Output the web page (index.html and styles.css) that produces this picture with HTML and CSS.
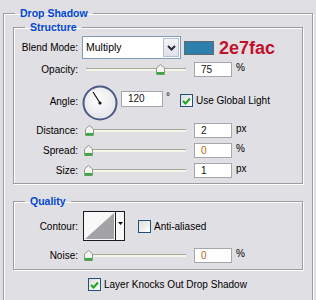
FILE: index.html
```html
<!DOCTYPE html>
<html>
<head>
<meta charset="utf-8">
<link rel="stylesheet" href="styles.css">
</head>
<body>
<fieldset class="group outer">
  <legend class="title outer-title">Drop Shadow</legend>

  <fieldset class="group inner structure">
    <legend class="title inner-title">Structure</legend>

    <div class="row row-blend">
      <span class="label">Blend Mode:</span>
      <div class="select">
        <span class="select-value">Multiply</span>
        <span class="select-btn">
          <svg width="9" height="6" viewBox="0 0 9 6"><path d="M1 1 L4.5 4.5 L8 1" fill="none" stroke="#2a2a3a" stroke-width="2"/></svg>
        </span>
      </div>
      <span class="swatch"></span>
      <span class="hex">2e7fac</span>
    </div>

    <div class="row row-opacity">
      <span class="label">Opacity:</span>
      <div class="slider">
        <div class="track"></div>
        <svg class="thumb" style="left:72px" width="9" height="11" viewBox="0 0 9 11"><path d="M0.5 10.5 V4 L4.5 0.5 L8.5 4 V10.5 Z" fill="#f4f4f0" stroke="#8c9a8c"/><rect x="1" y="8" width="7" height="2.5" fill="#3aa83a"/></svg>
      </div>
      <span class="num">75</span>
      <span class="unit">%</span>
    </div>

    <div class="row row-angle">
      <span class="label">Angle:</span>
      <svg class="dial" width="36" height="36" viewBox="0 0 36 36">
        <defs>
          <radialGradient id="dg" cx="0.45" cy="0.4" r="0.6">
            <stop offset="0" stop-color="#ffffff"/>
            <stop offset="1" stop-color="#e4e4ea"/>
          </radialGradient>
        </defs>
        <circle cx="18" cy="18" r="16.5" fill="url(#dg)" stroke="#4c5a86" stroke-width="2"/>
        <line x1="18" y1="18" x2="11" y2="7" stroke="#111" stroke-width="1.2"/>
        <circle cx="18" cy="18" r="1.6" fill="#111"/>
      </svg>
      <span class="num num-angle">120</span>
      <span class="deg">°</span>
      <span class="check checked check-global"><svg width="9" height="8" viewBox="0 0 9 8"><path d="M1 4 L3.5 6.5 L8 1.5" fill="none" stroke="#21a121" stroke-width="2"/></svg></span>
      <span class="check-label">Use Global Light</span>
    </div>

    <div class="row row-small">
      <span class="label">Distance:</span>
      <div class="slider">
        <div class="track"></div>
        <svg class="thumb" style="left:1px" width="9" height="11" viewBox="0 0 9 11"><path d="M0.5 10.5 V4 L4.5 0.5 L8.5 4 V10.5 Z" fill="#f4f4f0" stroke="#8c9a8c"/><rect x="1" y="8" width="7" height="2.5" fill="#3aa83a"/></svg>
      </div>
      <span class="num">2</span>
      <span class="unit">px</span>
    </div>

    <div class="row row-small">
      <span class="label">Spread:</span>
      <div class="slider">
        <div class="track"></div>
        <svg class="thumb" style="left:0px" width="9" height="11" viewBox="0 0 9 11"><path d="M0.5 10.5 V4 L4.5 0.5 L8.5 4 V10.5 Z" fill="#f4f4f0" stroke="#8c9a8c"/><rect x="1" y="8" width="7" height="2.5" fill="#3aa83a"/></svg>
      </div>
      <span class="num num-zero">0</span>
      <span class="unit">%</span>
    </div>

    <div class="row row-small">
      <span class="label">Size:</span>
      <div class="slider">
        <div class="track"></div>
        <svg class="thumb" style="left:0px" width="9" height="11" viewBox="0 0 9 11"><path d="M0.5 10.5 V4 L4.5 0.5 L8.5 4 V10.5 Z" fill="#f4f4f0" stroke="#8c9a8c"/><rect x="1" y="8" width="7" height="2.5" fill="#3aa83a"/></svg>
      </div>
      <span class="num">1</span>
      <span class="unit">px</span>
    </div>
  </fieldset>

  <fieldset class="group inner quality">
    <legend class="title inner-title">Quality</legend>

    <div class="row row-contour">
      <span class="label">Contour:</span>
      <svg class="contour" width="42" height="30" viewBox="0 0 42 30">
        <rect x="0.5" y="0.5" width="41" height="29" fill="#f8f8f8" stroke="#1a1a1a"/>
        <polygon points="2,28 31,2 31,28" fill="#a3a3a6"/>
        <line x1="32.5" y1="1" x2="32.5" y2="29" stroke="#1a1a1a"/>
        <polygon points="35,11 40,11 37.5,14" fill="#111"/>
      </svg>
      <span class="check check-aa"></span>
      <span class="check-label">Anti-aliased</span>
    </div>

    <div class="row row-small row-noise">
      <span class="label">Noise:</span>
      <div class="slider">
        <div class="track"></div>
        <svg class="thumb" style="left:0px" width="9" height="11" viewBox="0 0 9 11"><path d="M0.5 10.5 V4 L4.5 0.5 L8.5 4 V10.5 Z" fill="#f4f4f0" stroke="#8c9a8c"/><rect x="1" y="8" width="7" height="2.5" fill="#3aa83a"/></svg>
      </div>
      <span class="num num-zero">0</span>
      <span class="unit">%</span>
    </div>
  </fieldset>

  <div class="row row-knock">
    <span class="check checked"><svg width="9" height="8" viewBox="0 0 9 8"><path d="M1 4 L3.5 6.5 L8 1.5" fill="none" stroke="#21a121" stroke-width="2"/></svg></span>
    <span class="check-label">Layer Knocks Out Drop Shadow</span>
  </div>
</fieldset>
</body>
</html>
```

FILE: styles.css
```css
html, body {
  margin: 0;
  padding: 0;
  background: #e0dfe3;
}

body {
  font-family: "Liberation Sans", Arial, sans-serif;
  font-size: 10px;
  color: #000;
  width: 316px;
  height: 300px;
  overflow: hidden;
}

.group {
  box-sizing: border-box;
  margin: 0;
  min-inline-size: 0;
  border: 1px solid #9d9da1;
  box-shadow: inset 1px 1px 0 #ffffff, 1px 1px 0 #ffffff;
}

.outer {
  margin: 6px 0 0 3px;
  width: 310px;
  padding: 0 9px 20px 9px;
}

.title {
  font-weight: bold;
  font-size: 10.5px;
  color: #0046d5;
  line-height: 14px;
  height: 14px;
  padding: 0 5px;
}

.outer-title {
  margin-left: 2px;
}

.inner {
  width: 290px;
  padding: 0 7px 5px 7px;
}

.inner-title {
  margin-left: 4px;
}

.structure {
  margin-top: 0;
}

.quality {
  margin-top: 10px;
  padding-bottom: 6px;
}

.row {
  display: flex;
  align-items: center;
  white-space: nowrap;
}

.label {
  flex: none;
  width: 57px;
  text-align: right;
  line-height: 13px;
}

/* Blend mode */
.row-blend {
  margin-top: 2px;
  height: 23px;
}

.select {
  margin-left: 4px;
  width: 99px;
  height: 23px;
  box-sizing: border-box;
  border: 1px solid #7f9db9;
  background: #fff;
  display: flex;
  align-items: stretch;
}

.select-value {
  flex: 1;
  padding-left: 3px;
  line-height: 21px;
  font-size: 10.5px;
}

.select-btn {
  width: 16px;
  margin: 1px;
  box-sizing: border-box;
  border: 1px solid #b4c0d4;
  background: linear-gradient(#f4f5f8, #dde1ea);
  display: flex;
  align-items: center;
  justify-content: center;
}

.swatch {
  margin-left: 3px;
  width: 30px;
  height: 14px;
  box-sizing: border-box;
  background: #2e7fac;
  border: 1px solid #5a6a74;
}

.hex {
  margin-left: 5px;
  font-family: "Liberation Sans", Arial, sans-serif;
  font-weight: bold;
  font-size: 18px;
  line-height: 18px;
  color: #c3102c;
}

/* Sliders */
.slider {
  position: relative;
  margin-left: 6px;
  width: 102px;
  height: 15px;
  flex: none;
}

.track {
  position: absolute;
  left: 2px;
  right: 0;
  top: 6px;
  height: 3px;
  box-sizing: border-box;
  border-top: 1px solid #a9a9a0;
  background: #f6f5e9;
}

.thumb {
  position: absolute;
  top: 2px;
}

.num {
  margin-left: 8px;
  width: 38px;
  height: 15px;
  box-sizing: border-box;
  border: 1px solid #a7a7ab;
  background: #fff;
  padding-left: 6px;
  line-height: 13px;
  color: #111;
}

.num-zero {
  color: #b5650a;
}

.unit {
  margin-left: 4px;
  align-self: flex-start;
  line-height: 11px;
}

.row-opacity {
  margin-top: 3px;
  height: 15px;
}

/* Angle */
.row-angle {
  margin-top: 8px;
  height: 36px;
}

.row-angle .label {
  margin-top: -3px;
}

.dial {
  margin-left: 4px;
  flex: none;
}

.num-angle {
  margin-left: 3px;
  width: 42px;
  height: 16px;
  align-self: flex-start;
  margin-top: 6px;
  line-height: 14px;
}

.deg {
  margin-left: 3px;
  align-self: flex-start;
  margin-top: 6px;
}

.check {
  flex: none;
  width: 13px;
  height: 13px;
  box-sizing: border-box;
  border: 1px solid #1c5180;
  background: linear-gradient(135deg, #dcdcd7, #ffffff);
  display: flex;
  align-items: center;
  justify-content: center;
}

.check-global {
  margin-left: 10px;
  align-self: flex-start;
  margin-top: 9px;
}

.check-label {
  margin-left: 3px;
}

.row-angle .check-label {
  align-self: flex-start;
  margin-top: 9px;
  line-height: 13px;
}

.row-small {
  margin-top: 5px;
  height: 15px;
}

.row-angle + .row-small {
  margin-top: 2px;
}

/* Quality */
.row-contour {
  margin-top: 3px;
  height: 30px;
}

.contour {
  margin-left: 5px;
  flex: none;
}

.check-aa {
  margin-left: 13px;
}

.row-noise {
  margin-top: 7px;
}

.row-knock {
  margin-top: 8px;
  padding-left: 75px;
  height: 13px;
}
```
